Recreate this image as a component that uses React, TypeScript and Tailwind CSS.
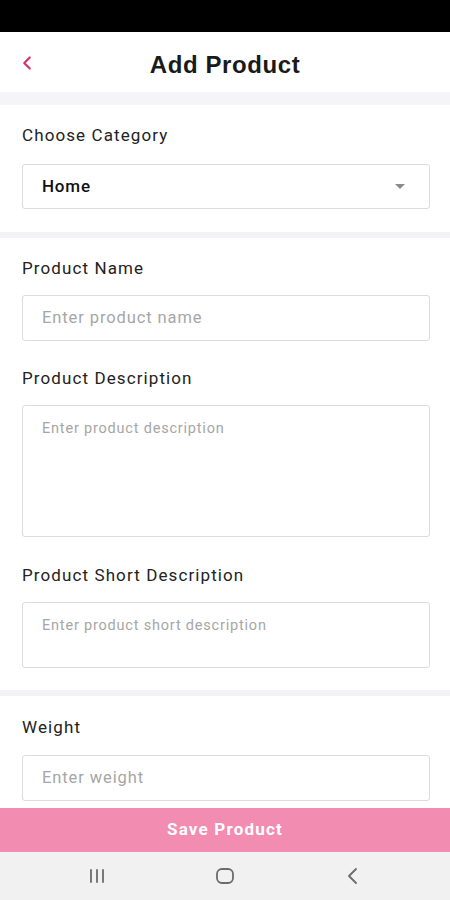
import { ChevronLeft } from 'lucide-react';

function Label({ children, mb = 'mb-[17px]' }: { children: React.ReactNode; mb?: string }) {
  return <div className={`text-[17px] leading-5 tracking-[1.1px] text-[#222] ${mb}`}>{children}</div>;
}

function Field({ placeholder, h, multi }: { placeholder: string; h: string; multi?: boolean }) {
  return (
    <div className={`${h} border border-[#dcdcdc] rounded-[3px] bg-white px-[19px] flex ${multi ? 'items-start pt-[12px]' : 'items-center'}`}>
      <span className={`${multi ? 'text-[14.5px] tracking-[0.8px]' : 'text-[16.5px] tracking-[0.9px]'} text-[#a6a6a6]`}>{placeholder}</span>
    </div>
  );
}

export default function App() {
  return (
    <div className="w-[450px] h-[900px] flex flex-col bg-white overflow-hidden" style={{ fontFamily: 'Roboto, "Liberation Sans", sans-serif' }}>
      <div className="h-[32px] bg-black shrink-0" />

      <div className="h-[60px] shrink-0 flex items-center relative">
        <ChevronLeft className="absolute left-[16px] top-[20px] w-[22px] h-[22px] text-[#d6336c]" strokeWidth={2.4} />
        <div className="flex-1 text-center text-[24px] pt-[6px] font-bold text-[#1a1a1a] tracking-[0.6px]" style={{ fontFamily: '"Liberation Sans", Arial, sans-serif' }}>Add Product</div>
      </div>
      <div className="h-[13px] bg-[#f4f4f9] shrink-0" />

      <div className="pl-[22px] pr-[20px] pt-[20px] pb-[23px] shrink-0">
        <Label mb="mb-[19px]">Choose Category</Label>
        <div className="h-[45px] border border-[#dcdcdc] rounded-[3px] flex items-center pl-[19px] pr-[24px] justify-between">
          <span className="text-[17px] font-medium text-[#111] tracking-[0.8px]">Home</span>
          <span className="w-0 h-0 border-l-[5px] border-r-[5px] border-t-[5px] border-l-transparent border-r-transparent border-t-[#8a8a8a]" />
        </div>
      </div>
      <div className="h-[6px] bg-[#f3f3f7] shrink-0" />

      <div className="pl-[22px] pr-[20px] pt-[20px] pb-[22px] shrink-0">
        <Label>Product Name</Label>
        <Field placeholder="Enter product name" h="h-[46px]" />
        <div className="h-[27px]" />
        <Label>Product Description</Label>
        <Field placeholder="Enter product description" h="h-[132px]" multi />
        <div className="h-[28px]" />
        <Label>Product Short Description</Label>
        <Field placeholder="Enter product short description" h="h-[66px]" multi />
      </div>
      <div className="h-[6px] bg-[#f3f3f7] shrink-0" />

      <div className="pl-[22px] pr-[20px] pt-[21px] shrink-0">
        <Label mb="mb-[18px]">Weight</Label>
        <Field placeholder="Enter weight" h="h-[46px]" />
      </div>

      <div className="flex-1" />
      <div className="h-[44px] bg-[#f28cb0] flex items-center justify-center shrink-0">
        <span className="text-white text-[17px] font-bold tracking-[1.2px]">Save Product</span>
      </div>

      <div className="h-[48px] bg-[#f1f1f1] shrink-0 flex items-center justify-between px-[86px]">
        <svg width="22" height="18" viewBox="0 0 22 18">
          <g stroke="#6b6b6b" strokeWidth="1.8" strokeLinecap="round">
            <line x1="5" y1="3" x2="5" y2="15" />
            <line x1="11" y1="3" x2="11" y2="15" />
            <line x1="17" y1="3" x2="17" y2="15" />
          </g>
        </svg>
        <svg width="22" height="18" viewBox="0 0 22 18">
          <rect x="3" y="2" width="16" height="14" rx="5" fill="none" stroke="#6b6b6b" strokeWidth="1.8" />
        </svg>
        <svg width="22" height="18" viewBox="0 0 22 18">
          <polyline points="14,2 7,9 14,16" fill="none" stroke="#6b6b6b" strokeWidth="1.8" strokeLinecap="round" strokeLinejoin="round" />
        </svg>
      </div>
    </div>
  );
}
